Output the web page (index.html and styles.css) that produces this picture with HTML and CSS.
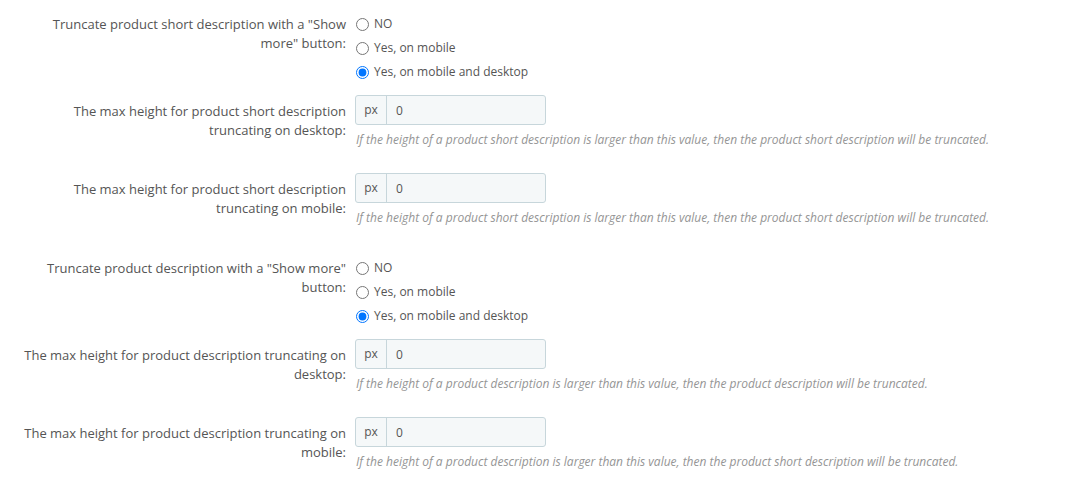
FILE: index.html
```html
<!DOCTYPE html>
<html>
<head>
<meta charset="utf-8">
<link rel="stylesheet" href="styles.css">
</head>
<body>
<form class="form">
  <div class="form-group radio-group">
    <label class="control-label">Truncate product short description with a "Show more" button:</label>
    <div class="controls">
      <label class="radio"><input type="radio" name="r1"> NO</label>
      <label class="radio"><input type="radio" name="r1"> Yes, on mobile</label>
      <label class="radio"><input type="radio" name="r1" checked> Yes, on mobile and desktop</label>
    </div>
  </div>
  <div class="form-group input-row">
    <label class="control-label">The max height for product short description truncating on desktop:</label>
    <div class="controls">
      <div class="input-group"><span class="addon">px</span><input class="field" type="text" value="0"></div>
      <p class="help">If the height of a product short description is larger than this value, then the product short description will be truncated.</p>
    </div>
  </div>
  <div class="form-group input-row">
    <label class="control-label">The max height for product short description truncating on mobile:</label>
    <div class="controls">
      <div class="input-group"><span class="addon">px</span><input class="field" type="text" value="0"></div>
      <p class="help">If the height of a product short description is larger than this value, then the product short description will be truncated.</p>
    </div>
  </div>
  <div class="form-group radio-group">
    <label class="control-label">Truncate product description with a "Show more" button:</label>
    <div class="controls">
      <label class="radio"><input type="radio" name="r2"> NO</label>
      <label class="radio"><input type="radio" name="r2"> Yes, on mobile</label>
      <label class="radio"><input type="radio" name="r2" checked> Yes, on mobile and desktop</label>
    </div>
  </div>
  <div class="form-group input-row">
    <label class="control-label">The max height for product description truncating on desktop:</label>
    <div class="controls">
      <div class="input-group"><span class="addon">px</span><input class="field" type="text" value="0"></div>
      <p class="help">If the height of a product description is larger than this value, then the product description will be truncated.</p>
    </div>
  </div>
  <div class="form-group input-row">
    <label class="control-label">The max height for product description truncating on mobile:</label>
    <div class="controls">
      <div class="input-group"><span class="addon">px</span><input class="field" type="text" value="0"></div>
      <p class="help">If the height of a product description is larger than this value, then the product short description will be truncated.</p>
    </div>
  </div>
</form>
</body>
</html>
```
FILE: styles.css
```css
html, body {
  margin: 0;
  padding: 0;
  background: #ffffff;
}
body {
  font-family: "Open Sans", "Liberation Sans", sans-serif;
  font-size: 13px;
  line-height: 1.42857;
  color: #555555;
}
.form {
  padding-top: 7px;
}
.form-group {
  display: grid;
  grid-template-columns: 328px 1fr;
  column-gap: 9px;
  padding-left: 18px;
  margin-bottom: 12px;
}
.radio-group {
  margin-bottom: 11px;
}
.control-label {
  text-align: right;
  color: #555555;
}
.radio-group .control-label {
  padding-top: 8px;
}
.radio-group .controls {
  padding-top: 5px;
}
.input-row .control-label {
  padding-top: 7px;
}
.controls {
  display: flex;
  flex-direction: column;
  align-items: flex-start;
}
.radio {
  display: flex;
  align-items: center;
  height: 24px;
  font-size: 12px;
  color: #555555;
}
.radio input {
  margin: 0 5px 0 1px;
  width: 13px;
  height: 13px;
}
.input-group {
  display: flex;
  width: 191px;
  height: 30px;
  box-sizing: border-box;
  border: 1px solid #c7d6db;
  border-radius: 3px;
  background: #f5f8f9;
}
.addon {
  display: flex;
  align-items: center;
  justify-content: center;
  width: 30px;
  border-right: 1px solid #c7d6db;
  font-size: 12px;
  color: #555555;
}
.field {
  flex: 1;
  min-width: 0;
  border: 0;
  background: transparent;
  padding: 0 9px;
  font-family: inherit;
  font-size: 12px;
  color: #555555;
  outline: none;
}
.help {
  margin: 6px 0 13px 1px;
  font-size: 12px;
  font-style: italic;
  line-height: 17px;
  color: #959595;
}
```
